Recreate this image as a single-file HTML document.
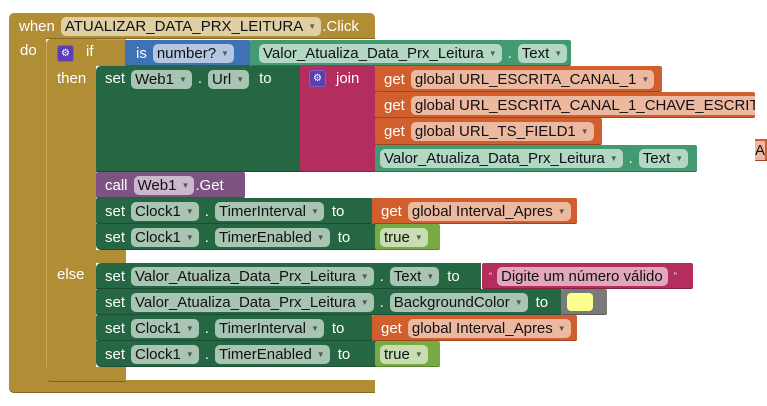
<!DOCTYPE html><html><head><style>
body{margin:0;width:767px;height:406px;background:#fff;position:relative;overflow:hidden;font-family:"Liberation Sans",Arial,sans-serif;font-size:15px;}
.b{position:absolute;display:flex;align-items:center;box-sizing:border-box;padding-left:9px;color:#fff;white-space:nowrap;overflow:hidden;border-radius:2px;box-shadow:inset 0 -1px 0 rgba(0,0,0,.25);}
.b>*{margin-right:6px;}
.p{display:inline-block;height:19px;line-height:19px;border-radius:5px;padding:0 5px 0 4px;color:#111;}
.p i{font-style:normal;font-size:8px;margin-left:5px;opacity:.6;vertical-align:2px}
.g{background:#b18e35}
.dg{background:#266743}.dg .p{background:#a8c4b3}
.lg{background:#439970}.lg .p{background:#b2d8c4}
.or{background:#d05f2d}.or .p{background:#ecb8a0}
.pu{background:#7d5382}.pu .p{background:#cbb8cd}
.pk{background:#b32d5e}.pk .p{background:#e0a7bd}
.bl{background:#3f71b5}.bl .p{background:#b3c6e2}
.gr{background:#77ab41}.gr .p{background:#c8ddb2}
.gear{display:inline-block;width:15px;height:15px;background:#5b3fb5;border:1px solid #fff3;border-radius:3px;color:#fff;font-size:10px;line-height:15px;text-align:center}
</style></head><body>
<div class="b g" style="left:9px;top:13px;width:366px;height:26px;border-radius:5px 5px 0 0;padding-left:10px"><span>when</span><span class="p" style="background:#e0cfa2">ATUALIZAR_DATA_PRX_LEITURA<i>▼</i></span><span style="margin-left:-5px">.Click</span></div>
<div class="g" style="position:absolute;left:9px;top:38px;width:37px;height:355px;border-radius:0 0 0 5px"></div>
<div style="position:absolute;left:20px;top:42px;color:#fff">do</div>
<div class="g" style="position:absolute;left:9px;top:380px;width:366px;height:13px;border-radius:0 0 0 5px;box-shadow:inset 0 -1px 0 rgba(0,0,0,.25)"></div>
<div class="g" style="position:absolute;left:46px;top:39px;width:80px;height:27px;border-radius:5px 0 0 0;border-left:1px solid #c9a85a;border-top:1px solid #c9a85a;box-sizing:border-box"></div>
<div class="g" style="position:absolute;left:46px;top:39px;width:50px;height:343px;border-radius:5px 0 0 5px;border-left:1px solid #c9a85a;box-sizing:border-box"></div>
<div class="g" style="position:absolute;left:46px;top:367px;width:80px;height:15px;border-radius:0 0 0 5px;box-shadow:inset 0 -1px 0 rgba(0,0,0,.3)"></div>
<div class="g" style="position:absolute;left:96px;top:250px;width:30px;height:13px"></div>
<div style="position:absolute;left:57px;top:43px;color:#fff"><span class="gear">⚙</span><span style="margin-left:12px">if</span></div>
<div style="position:absolute;left:57px;top:70px;color:#fff">then</div>
<div style="position:absolute;left:57px;top:266px;color:#fff">else</div>
<div class="b bl" style="left:125px;top:40px;width:126px;height:26px"><span style="margin-left:2px">is</span><span class="p">number?<i>▼</i></span></div>
<div class="b lg" style="left:250px;top:40px;width:321px;height:26px"><span class="p">Valor_Atualiza_Data_Prx_Leitura<i>▼</i></span><span>.</span><span class="p">Text<i>▼</i></span></div>
<div class="b dg" style="left:96px;top:66px;width:205px;height:106px;align-items:flex-start;padding-top:4px;border-radius:5px 0 0 0"><span>set</span><span class="p">Web1<i>▼</i></span><span>.</span><span class="p">Url<i>▼</i></span><span style="margin-left:4px">to</span></div>
<div class="b pk" style="left:300px;top:66px;width:76px;height:106px;align-items:flex-start;padding-top:4px"><span class="gear">⚙</span><span style="margin-left:4px">join</span></div>
<div class="b or" style="left:375px;top:66px;width:287px;height:26px"><span>get</span><span class="p">global URL_ESCRITA_CANAL_1<i>▼</i></span></div>
<div class="b or" style="left:375px;top:92px;width:380px;height:26px"><span>get</span><span class="p" style="border-radius:5px 0 0 5px">global URL_ESCRITA_CANAL_1_CHAVE_ESCRITA</span></div>
<div class="b or" style="left:375px;top:118px;width:227px;height:27px"><span>get</span><span class="p">global URL_TS_FIELD1<i>▼</i></span></div>
<div class="b lg" style="left:375px;top:145px;width:322px;height:27px;padding-left:5px"><span class="p">Valor_Atualiza_Data_Prx_Leitura<i>▼</i></span><span>.</span><span class="p">Text<i>▼</i></span></div>
<div class="b or" style="left:755px;top:139px;width:12px;height:22px;padding-left:0;border-radius:0"><span class="p" style="padding:0;color:#111;border-radius:0">A</span></div>
<div class="b pu" style="left:96px;top:172px;width:149px;height:26px"><span>call</span><span class="p">Web1<i>▼</i></span><span style="margin-left:-5px">.Get</span></div>
<div class="b dg" style="left:96px;top:198px;width:277px;height:26px"><span>set</span><span class="p">Clock1<i>▼</i></span><span>.</span><span class="p">TimerInterval<i>▼</i></span><span style="margin-left:2px">to</span></div>
<div class="b or" style="left:372px;top:198px;width:205px;height:26px"><span>get</span><span class="p">global Interval_Apres<i>▼</i></span></div>
<div class="b dg" style="left:96px;top:224px;width:280px;height:26px;border-radius:0 0 0 5px"><span>set</span><span class="p">Clock1<i>▼</i></span><span>.</span><span class="p">TimerEnabled<i>▼</i></span><span style="margin-left:2px">to</span></div>
<div class="b gr" style="left:375px;top:224px;width:65px;height:26px;padding-left:5px"><span class="p">true<i>▼</i></span></div>
<div class="b dg" style="left:96px;top:263px;width:385px;height:26px;border-radius:5px 0 0 0"><span>set</span><span class="p">Valor_Atualiza_Data_Prx_Leitura<i>▼</i></span><span>.</span><span class="p">Text<i>▼</i></span><span style="margin-left:2px">to</span></div>
<div class="b pk" style="left:482px;top:263px;width:211px;height:26px;padding-left:7px"><span style="font-size:9px;margin-right:5px">“</span><span class="p" style="margin-right:6px">Digite um número válido</span><span style="font-size:9px">”</span></div>
<div class="b dg" style="left:96px;top:289px;width:466px;height:26px"><span>set</span><span class="p">Valor_Atualiza_Data_Prx_Leitura<i>▼</i></span><span>.</span><span class="p">BackgroundColor<i>▼</i></span><span style="margin-left:2px">to</span></div>
<div class="b" style="left:561px;top:289px;width:46px;height:26px;background:#7a7a7a;padding-left:6px"><span style="display:inline-block;width:26px;height:18px;background:#ffff8c;border-radius:4px"></span></div>
<div class="b dg" style="left:96px;top:315px;width:277px;height:26px"><span>set</span><span class="p">Clock1<i>▼</i></span><span>.</span><span class="p">TimerInterval<i>▼</i></span><span style="margin-left:2px">to</span></div>
<div class="b or" style="left:372px;top:315px;width:205px;height:26px"><span>get</span><span class="p">global Interval_Apres<i>▼</i></span></div>
<div class="b dg" style="left:96px;top:341px;width:280px;height:26px;border-radius:0 0 0 5px"><span>set</span><span class="p">Clock1<i>▼</i></span><span>.</span><span class="p">TimerEnabled<i>▼</i></span><span style="margin-left:2px">to</span></div>
<div class="b gr" style="left:375px;top:341px;width:65px;height:26px;padding-left:5px"><span class="p">true<i>▼</i></span></div>
</body></html>
